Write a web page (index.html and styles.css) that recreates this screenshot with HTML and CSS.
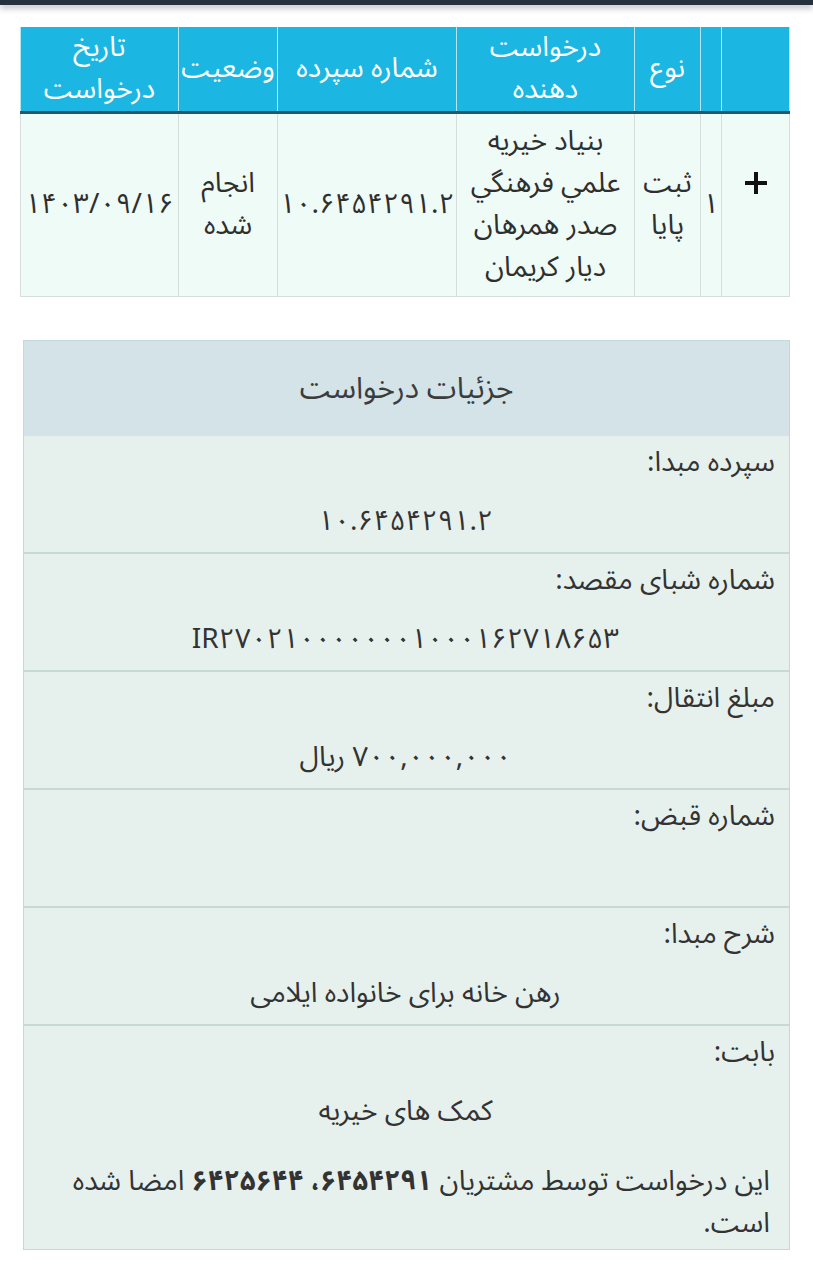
FILE: index.html
```html
<!DOCTYPE html>
<html lang="fa" dir="rtl">
<head>
<meta charset="utf-8">
<title>جزئیات درخواست</title>
<link rel="stylesheet" href="styles.css">
</head>
<body>
<div class="appbar-edge"></div>
<main class="page">
  <table class="req-table">
    <colgroup>
      <col class="c-expand">
      <col class="c-index">
      <col class="c-type">
      <col class="c-requester">
      <col class="c-deposit">
      <col class="c-status">
      <col class="c-date">
    </colgroup>
    <thead>
      <tr>
        <th></th>
        <th></th>
        <th>نوع</th>
        <th>درخواست<br>دهنده</th>
        <th>شماره سپرده</th>
        <th>وضعیت</th>
        <th>تاریخ<br>درخواست</th>
      </tr>
    </thead>
    <tbody>
      <tr>
        <td class="expand">
          <svg class="plus" viewBox="0 0 24 24" width="24" height="24" aria-hidden="true">
            <rect x="10" y="1" width="4" height="22" fill="#111"/>
            <rect x="1" y="10" width="22" height="4" fill="#111"/>
          </svg>
        </td>
        <td>۱</td>
        <td>ثبت<br>پایا</td>
        <td>بنیاد خیریه<br>علمي فرهنگي<br>صدر همرهان<br>دیار کریمان</td>
        <td>۱۰.۶۴۵۴۲۹۱.۲</td>
        <td>انجام<br>شده</td>
        <td>۱۴۰۳/۰۹/۱۶</td>
      </tr>
    </tbody>
  </table>

  <section class="details">
    <h2 class="details-title">جزئیات درخواست</h2>
    <div class="detail-row">
      <div class="detail-label">سپرده مبدا:</div>
      <div class="detail-value">۱۰.۶۴۵۴۲۹۱.۲</div>
    </div>
    <div class="detail-row">
      <div class="detail-label">شماره شبای مقصد:</div>
      <div class="detail-value">IR۲۷۰۲۱۰۰۰۰۰۰۰۱۰۰۰۱۶۲۷۱۸۶۵۳</div>
    </div>
    <div class="detail-row">
      <div class="detail-label">مبلغ انتقال:</div>
      <div class="detail-value">۷۰۰,۰۰۰,۰۰۰ ریال</div>
    </div>
    <div class="detail-row">
      <div class="detail-label">شماره قبض:</div>
      <div class="detail-value"></div>
    </div>
    <div class="detail-row">
      <div class="detail-label">شرح مبدا:</div>
      <div class="detail-value">رهن خانه برای خانواده ایلامی</div>
    </div>
    <div class="detail-row last">
      <div class="detail-label">بابت:</div>
      <div class="detail-value">کمک های خیریه</div>
      <p class="detail-note">این درخواست توسط مشتریان <b>۶۴۵۴۲۹۱، ۶۴۲۵۶۴۴</b> امضا شده است.</p>
    </div>
  </section>
</main>
</body>
</html>
```

FILE: styles.css
```css
html, body {
  margin: 0;
  padding: 0;
  background: #ffffff;
}

body {
  font-family: "Noto Sans Arabic", "Vazirmatn", "DejaVu Sans", sans-serif;
  font-size: 28px;
  color: #333333;
}

.appbar-edge {
  height: 5px;
  background: #26323b;
  box-shadow: 0 3px 6px rgba(30, 42, 52, 0.35);
}

.page {
  padding: 22px 23px 30px 21px;
}

/* ---------- request table ---------- */
.req-table {
  width: 769px;
  border-collapse: collapse;
  table-layout: fixed;
  background: #effbf6;
}

.c-expand { width: 68px; }
.c-index { width: 21px; }
.c-type { width: 66px; }
.c-requester { width: 178px; }
.c-deposit { width: 179px; }
.c-status { width: 99px; }
.c-date { width: 158px; }

.req-table th {
  background: #1bb6e2;
  color: #ffffff;
  font-weight: normal;
  line-height: 42px;
  padding: 0 1px;
  border-left: 1px solid #b5e6f4;
  border-right: 1px solid #b5e6f4;
  border-bottom: 3px solid #26566a;
  text-align: center;
  vertical-align: middle;
  white-space: nowrap;
}

.req-table td {
  line-height: 42px;
  padding: 7px 1px;
  border: 1px solid #d6dedb;
  text-align: center;
  vertical-align: middle;
  color: #2f2f2f;
  white-space: nowrap;
}

.plus {
  display: block;
  margin: 0 auto 44px;
}

/* ---------- details panel ---------- */
.details {
  margin: 43px 0 0 2px;
  border: 1px solid #c4d9da;
  background: #e6f1ed;
}

.details-title {
  margin: 0;
  height: 95px;
  line-height: 95px;
  background: #d3e3e8;
  color: #3c3c3c;
  font-size: 30px;
  font-weight: normal;
  text-align: center;
}

.detail-row {
  padding: 7px 14px 10px 12px;
  border-top: 2px solid #c6dbd8;
}

.detail-row:first-of-type {
  border-top: none;
}

.detail-label {
  line-height: 40px;
  text-align: right;
}

.detail-value {
  margin-top: 19px;
  min-height: 40px;
  line-height: 40px;
  text-align: center;
}

.detail-row.last {
  padding-bottom: 4px;
}

.detail-note {
  margin: 29px 5px 0 0;
  line-height: 42px;
  text-align: right;
}

.detail-note b {
  font-weight: bold;
}
```
